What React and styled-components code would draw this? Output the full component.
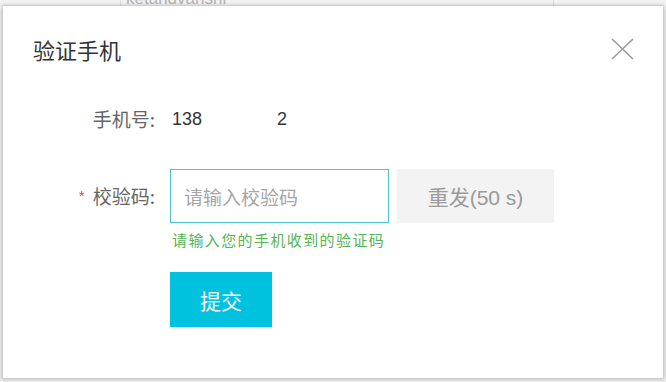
import React, { useState } from 'react';
import styled, { createGlobalStyle } from 'styled-components';

const GlobalStyle = createGlobalStyle`
  html, body {
    margin: 0;
    padding: 0;
    background: #ebebeb;
  }
  * {
    box-sizing: border-box;
  }
`;

const Page = styled.div`
  position: relative;
  width: 666px;
  height: 382px;
  overflow: hidden;
  background: #ebebeb;
  font-family: "Liberation Sans", "Noto Sans CJK SC", sans-serif;
`;

const BackRow = styled.div`
  display: flex;
  height: 22px;
  margin-top: -12px;
  padding-left: 120px;
  background: #f2f2f2;
`;

const BackCell = styled.div`
  width: ${(p) => p.width}px;
  padding-left: 5px;
  font-size: 17px;
  line-height: 22px;
  color: #b4b4b4;
  border-left: 1px solid #dedede;
`;

const Modal = styled.div`
  position: absolute;
  top: 6px;
  left: 3px;
  width: 660px;
  height: 372px;
  background: #fff;
  box-shadow: 0 0 3px 1px rgba(0, 0, 0, 0.22);
`;

const Header = styled.div`
  display: flex;
  align-items: center;
  justify-content: space-between;
  padding: 30px 29px 30px 30px;
`;

const Title = styled.h2`
  margin: 0;
  font-size: 22px;
  line-height: 26px;
  font-weight: normal;
  color: #333;
  font-family: "Noto Sans CJK SC", sans-serif;
`;

const CloseBtn = styled.button`
  display: flex;
  padding: 0;
  border: 0;
  background: none;
  cursor: pointer;
`;

const Body = styled.div`
  display: flex;
  flex-direction: column;
  padding-top: 15px;
`;

const Row = styled.div`
  display: flex;
  align-items: ${(p) => (p.top ? 'flex-start' : 'center')};
  margin-top: ${(p) => p.gap || 0}px;
`;

const Label = styled.label`
  display: flex;
  justify-content: flex-end;
  align-items: center;
  gap: 8px;
  width: 152px;
  margin-right: 15px;
  font-size: 19px;
  line-height: ${(p) => p.lh || 24}px;
  color: #666;
  font-family: "Noto Sans CJK SC", sans-serif;
`;

const Star = styled.span`
  color: #f04134;
  font-family: "Liberation Sans", sans-serif;
  font-size: 15px;
`;

const Phone = styled.span`
  display: flex;
  font-size: 18px;
  line-height: 24px;
  color: #333;
  padding-left: 2px;
`;

const Masked = styled.span`
  display: inline-block;
  width: 75px;
`;

const Field = styled.div`
  display: flex;
  flex-direction: column;
`;

const InputLine = styled.div`
  display: flex;
  gap: 8px;
`;

const CodeInput = styled.input`
  width: 219px;
  height: 54px;
  padding: 0 13px;
  border: 1px solid #4fc3cf;
  outline: none;
  font-size: 19px;
  color: #333;
  font-family: "Noto Sans CJK SC", sans-serif;
  &::placeholder {
    color: #a6a6a6;
  }
`;

const ResendBtn = styled.button`
  width: 157px;
  height: 54px;
  border: 0;
  background: #f3f3f3;
  color: #9a9a9a;
  font-size: 21px;
  font-family: "Liberation Sans", "Noto Sans CJK SC", sans-serif;
  cursor: not-allowed;
`;

const Hint = styled.div`
  margin-top: 7px;
  padding-left: 2px;
  font-size: 15px;
  line-height: 20px;
  letter-spacing: 1.4px;
  color: #55b554;
  font-family: "Noto Sans CJK SC", sans-serif;
`;

const SubmitBtn = styled.button`
  width: 102px;
  height: 55px;
  border: 0;
  background: #00c1de;
  color: #fff;
  font-size: 21px;
  font-family: "Noto Sans CJK SC", sans-serif;
  cursor: pointer;
`;

function CloseIcon() {
  return (
    <svg width="23" height="22" viewBox="0 0 23 22">
      <path d="M1 1 L22 21 M22 1 L1 21" stroke="#9a9a9a" strokeWidth="1.6" fill="none" />
    </svg>
  );
}

export default function App() {
  const [code, setCode] = useState('');

  return (
    <Page>
      <GlobalStyle />
      <BackRow>
        <BackCell width={433}>ketandvanshi</BackCell>
        <BackCell width={113} />
      </BackRow>
      <Modal>
        <Header>
          <Title>验证手机</Title>
          <CloseBtn aria-label="close">
            <CloseIcon />
          </CloseBtn>
        </Header>
        <Body>
          <Row>
            <Label>手机号:</Label>
            <Phone>
              138<Masked />2
            </Phone>
          </Row>
          <Row top gap={38}>
            <Label lh={54}>
              <Star>*</Star>校验码:
            </Label>
            <Field>
              <InputLine>
                <CodeInput
                  placeholder="请输入校验码"
                  value={code}
                  onChange={(e) => setCode(e.target.value)}
                />
                <ResendBtn>重发(50 s)</ResendBtn>
              </InputLine>
              <Hint>请输入您的手机收到的验证码</Hint>
            </Field>
          </Row>
          <Row gap={22}>
            <Label />
            <SubmitBtn>提交</SubmitBtn>
          </Row>
        </Body>
      </Modal>
    </Page>
  );
}
